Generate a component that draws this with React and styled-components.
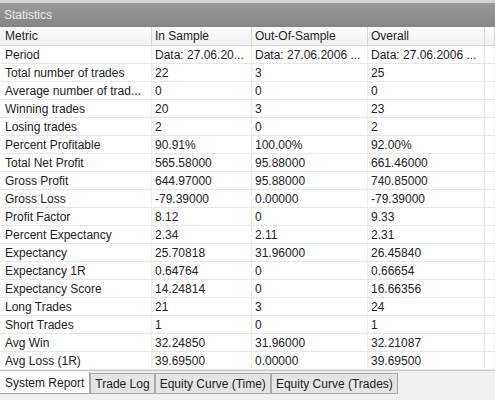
import React from 'react';
import styled, { createGlobalStyle } from 'styled-components';

/*--------------------------
    Data
--------------------------*/
const COLUMNS = ['Metric', 'In Sample', 'Out-Of-Sample', 'Overall'];

const ROWS = [
    ['Period', 'Data: 27.06.20...', 'Data: 27.06.2006 ...', 'Data: 27.06.2006 ...'],
    ['Total number of trades', '22', '3', '25'],
    ['Average number of trad...', '0', '0', '0'],
    ['Winning trades', '20', '3', '23'],
    ['Losing trades', '2', '0', '2'],
    ['Percent Profitable', '90.91%', '100.00%', '92.00%'],
    ['Total Net Profit', '565.58000', '95.88000', '661.46000'],
    ['Gross Profit', '644.97000', '95.88000', '740.85000'],
    ['Gross Loss', '-79.39000', '0.00000', '-79.39000'],
    ['Profit Factor', '8.12', '0', '9.33'],
    ['Percent Expectancy', '2.34', '2.11', '2.31'],
    ['Expectancy', '25.70818', '31.96000', '26.45840'],
    ['Expectancy 1R', '0.64764', '0', '0.66654'],
    ['Expectancy Score', '14.24814', '0', '16.66356'],
    ['Long Trades', '21', '3', '24'],
    ['Short Trades', '1', '0', '1'],
    ['Avg Win', '32.24850', '31.96000', '32.21087'],
    ['Avg Loss (1R)', '39.69500', '0.00000', '39.69500'],
];

const TABS = ['System Report', 'Trade Log', 'Equity Curve (Time)', 'Equity Curve (Trades)'];

/*--------------------------
    Styled
--------------------------*/
const GlobalStyle = createGlobalStyle`
    html, body {
        margin: 0;
        padding: 0;
        background: #ffffff;
    }
    body {
        font-family: "Liberation Sans", Arial, sans-serif;
        font-size: 12px;
        color: #000;
    }
`;

const Window = styled.div`
    display: flex;
    flex-direction: column;
    width: 495px;
    height: 400px;
    background: #ffffff;
    overflow: hidden;
`;

const TitleBar = styled.div`
    display: flex;
    align-items: center;
    height: 24px;
    padding: 0 0 0 4px;
    border-top: 3px solid #d4d4d4;
    background: linear-gradient(#9a9a9a, #858585);
    color: #ececec;
    font-size: 12px;
`;

const Table = styled.div`
    display: grid;
    grid-template-columns: 152px 100px 116px 117px 10px;
    grid-template-rows: 19px;
    grid-auto-rows: 18px;
    flex: 1;
    align-content: start;
    background: #ffffff;
`;

const Cell = styled.div`
    display: flex;
    align-items: center;
    padding: 0 0 0 ${props => props.first ? 5 : 3}px;
    border-right: 1px solid ${props => props.head ? '#d6d6d6' : '#ececec'};
    border-bottom: 1px solid ${props => props.head ? '#d6d6d6' : '#e6e6e6'};
    white-space: nowrap;
    overflow: hidden;
    color: #222222;
`;

const HeadCell = styled(Cell)`
    background: linear-gradient(#fbfbfb, #f1f1f1);
`;

const TabBar = styled.div`
    display: flex;
    align-items: flex-start;
    height: 27px;
    padding: 2px 0 0 0;
    background: #f0f0f0;
    border-top: 1px solid #c8c8c8;
`;

const Tab = styled.div`
    display: flex;
    align-items: center;
    height: ${props => props.active ? 21 : 19}px;
    margin: ${props => props.active ? '-1px 0 0 0' : '0'};
    padding: 0 ${props => props.active ? 5 : 4}px;
    border: 1px solid #a8a8a8;
    border-top: ${props => props.active ? 'none' : '1px solid #a8a8a8'};
    border-left: ${props => props.first ? 'none' : '1px solid #a8a8a8'};
    background: ${props => props.active ? '#ffffff' : '#e4e4e4'};
    color: #222222;
    font-size: 12px;
    white-space: nowrap;
`;

/*--------------------------
    Main Component
--------------------------*/
export default function App() {

    return (
        <>
            <GlobalStyle />
            <Window>
                <TitleBar>Statistics</TitleBar>
                <Table>
                    {COLUMNS.map((col, i) => (
                        <HeadCell key={col} head first={i === 0}>{col}</HeadCell>
                    ))}
                    <HeadCell head />
                    {ROWS.map((row) => (
                        <React.Fragment key={row[0]}>
                            {row.map((value, i) => (
                                <Cell key={i} first={i === 0}>{value}</Cell>
                            ))}
                            <Cell />
                        </React.Fragment>
                    ))}
                </Table>
                <TabBar>
                    {TABS.map((tab, i) => (
                        <Tab key={tab} active={i === 0} first={i === 0}>{tab}</Tab>
                    ))}
                </TabBar>
            </Window>
        </>
    );
}
